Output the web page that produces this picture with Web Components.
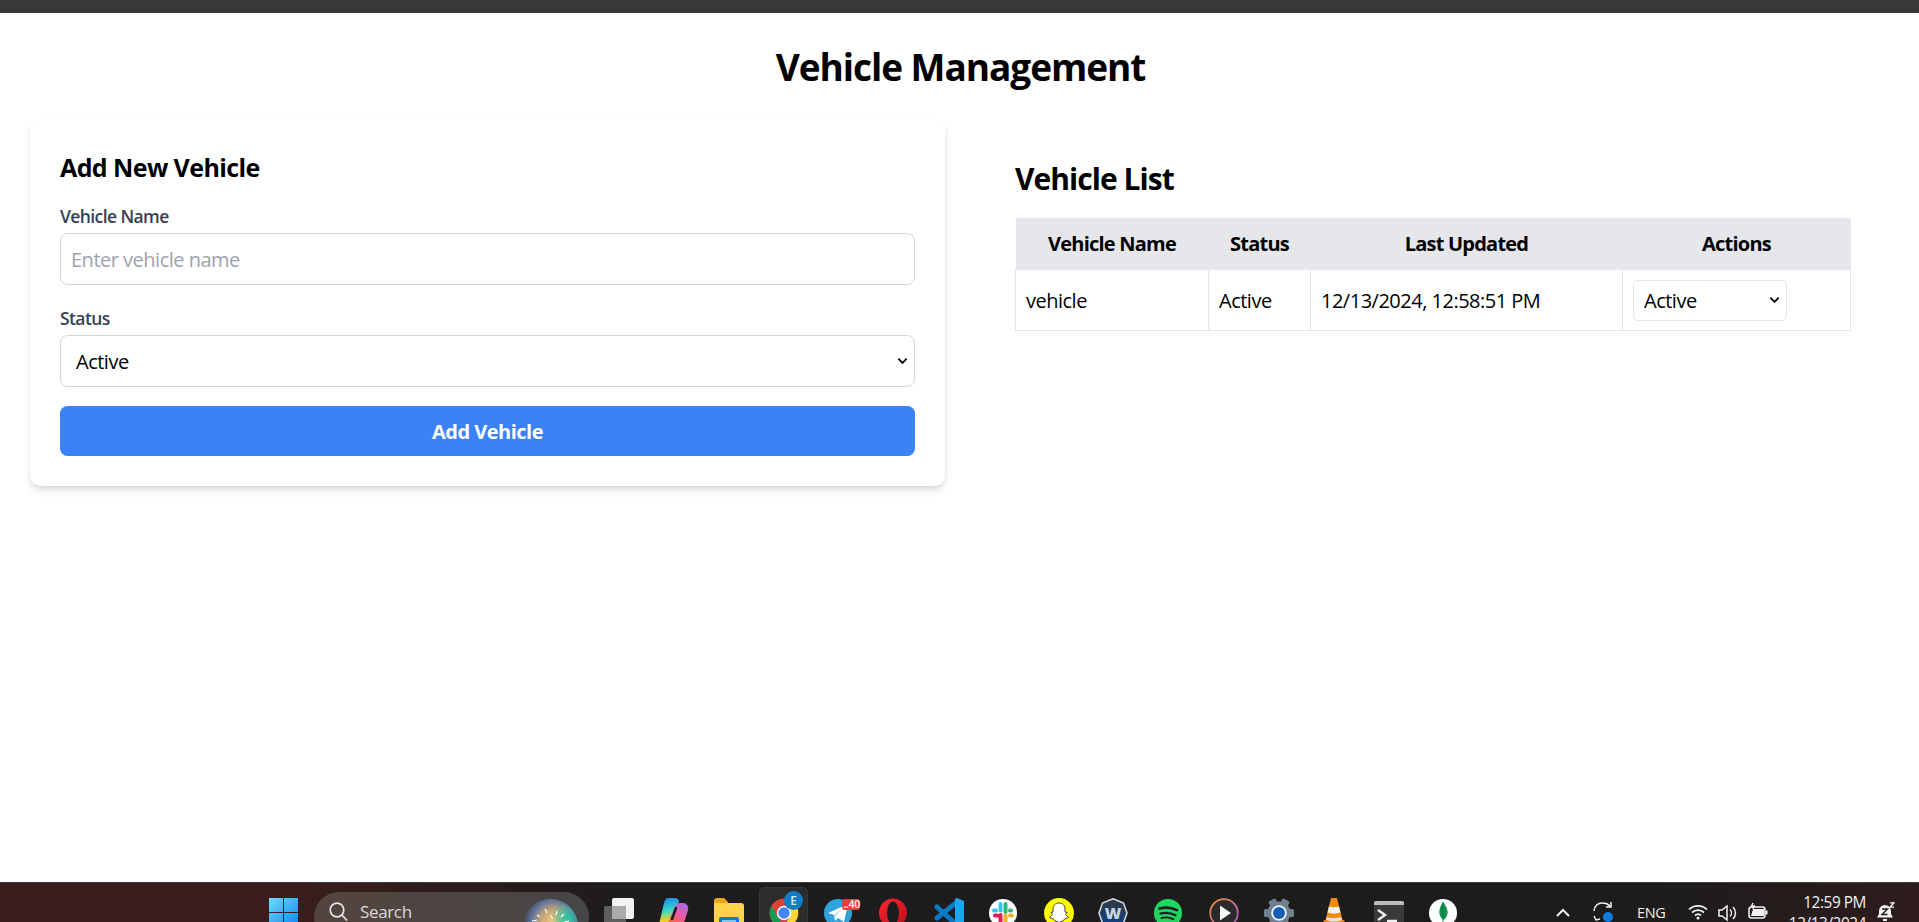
<!DOCTYPE html>
<html lang="en">
<head>
<meta charset="utf-8">
<title>Vehicle Management</title>
<style>
  html, body { margin: 0; height: 922px; overflow: hidden; background: #fff; }
  body { display: flex; flex-direction: column; font-family: "Open Sans", "Noto Sans", sans-serif; color: #000; }
</style>
</head>
<body>
<vehicle-app></vehicle-app>
<win-taskbar></win-taskbar>

<script>
// Shared text squeeze, the reference font is narrower than what we have here
// The native select arrow is too small here, so it is redrawn as an svg background
const FIELD_CSS = `
  select {
    display: block;
    box-sizing: border-box;
    appearance: none;
    background: #fff url("data:image/svg+xml,%3Csvg xmlns='http://www.w3.org/2000/svg' viewBox='0 0 12 8'%3E%3Cpath d='M1.5 1.5 6 6l4.500-4.500' fill='none' stroke='%23000' stroke-width='2'/%3E%3C/svg%3E") no-repeat right 6px center / 11px 8px;
    color: #000;
    font: 20px "Open Sans", sans-serif;
    letter-spacing: -0.5px;
  }
`;

class VehicleForm extends HTMLElement {
  constructor() {
    super();
    const shadow = this.attachShadow({ mode: 'open' });
    shadow.innerHTML = `
      <style>
      ${FIELD_CSS}
      :host {
        display: block;
        box-sizing: border-box;
        height: 366px;
        padding: 30px;
        border-radius: 10px;
        background: #fff;
        box-shadow: 0 5px 8px -1px #0000001f, 0 2px 5px -2px #0000001a;
      }
      h2 { margin: 0 0 20px; font-size: 25px; line-height: 34px; padding-bottom: 1px; font-weight: 700; letter-spacing: -0.6px; }
      label { display: block; height: 25px; margin-bottom: 3px; font-size: 17.5px; line-height: 23px; font-weight: 600; color: #374151; letter-spacing: -0.6px; }
      input {
        display: block;
        box-sizing: border-box;
        width: 100%;
        height: 52px;
        margin-bottom: 22px;
        padding: 0 10px;
        border: 1px solid #d1d5db;
        border-radius: 7.5px;
        outline: none;
        font: 20px "Open Sans", sans-serif;
        letter-spacing: -0.5px;
      }
      input::placeholder { color: #9ca3af; opacity: 1; }
      select { width: 100%; height: 52px; margin-bottom: 19px; padding: 0 15px; border: 1px solid #d1d5db; border-radius: 7.5px; }
      button {
        display: block;
        width: 100%;
        height: 50px;
        border: 0;
        border-radius: 7.5px;
        background: #3b82f6;
        color: #fff;
        font: 700 20px "Open Sans", sans-serif;
        letter-spacing: -0.5px;
      }
      </style>
      <h2>Add New Vehicle</h2>
      <label for="name">Vehicle Name</label>
      <input id="name" type="text" placeholder="Enter vehicle name">
      <label for="status">Status</label>
      <select id="status"><option>Active</option><option>Inactive</option></select>
      <button type="button">Add Vehicle</button>
    `;
  }
}
customElements.define('vehicle-form', VehicleForm);

class VehicleTable extends HTMLElement {
  constructor() {
    super();
    const shadow = this.attachShadow({ mode: 'open' });
    shadow.innerHTML = `
      <style>
      ${FIELD_CSS}
      :host { display: block; padding: 40px; }
      h2 { margin: 0 0 18px; font-size: 30px; line-height: 38px; padding-bottom: 2px; font-weight: 700; letter-spacing: -0.95px; }
      table { width: 835px; table-layout: fixed; border-collapse: collapse; font-size: 20px; letter-spacing: -0.5px; }
      th { height: 51px; padding: 0 10px; background: #e5e7eb; font-weight: 700; text-align: center; letter-spacing: -0.78px; }
      td { height: 60px; padding: 0 10px; border: 1px solid #e5e7eb; text-align: left; white-space: nowrap; }
      select { width: 154px; height: 41px; padding: 0 10px; border: 1px solid #e5e7eb; border-radius: 5px; }
      </style>
      <h2>Vehicle List</h2>
      <table>
        <colgroup><col style="width:193px"><col style="width:102px"><col style="width:312px"><col style="width:228px"></colgroup>
        <thead><tr><th>Vehicle Name</th><th>Status</th><th>Last Updated</th><th>Actions</th></tr></thead>
        <tbody>
          <tr>
            <td>vehicle</td>
            <td>Active</td>
            <td>12/13/2024, 12:58:51 PM</td>
            <td><select><option>Active</option><option>Inactive</option></select></td>
          </tr>
        </tbody>
      </table>
    `;
  }
}
customElements.define('vehicle-table', VehicleTable);

class VehicleApp extends HTMLElement {
  constructor() {
    super();
    const shadow = this.attachShadow({ mode: 'open' });
    shadow.innerHTML = `
      <style>
      :host { display: block; flex: 1; min-height: 0; }
      #browser-edge { height: 13px; background: #383838; }
      h1 { margin: 0; padding: 31px 0 31px 2px; text-align: center; font-size: 37px; line-height: 45px; font-weight: 700; letter-spacing: -1.05px; }
      #columns { display: grid; grid-template-columns: 915px 915px; gap: 30px; padding: 0 30px; align-items: start; }
      </style>
      <div id="browser-edge"></div>
      <h1>Vehicle Management</h1>
      <div id="columns">
        <vehicle-form></vehicle-form>
        <vehicle-table></vehicle-table>
      </div>
    `;
  }
}
customElements.define('vehicle-app', VehicleApp);

// All taskbar pictures are drawn on a 30x30 box, the taskbar cuts off the bottom
const ICONS = {
  windows: `<defs><linearGradient id="w" x1="0" y1="0" x2="1" y2="1"><stop offset="0" stop-color="#6fdcff"/><stop offset="1" stop-color="#0a86e8"/></linearGradient></defs>
    <path fill="url(#w)" d="M0 0h14v14H0zM15 0h14v14H15zM0 15h14v14H0zM15 15h14v14H15z"/>`,
  taskview: `<rect x="0" y="8" width="22" height="22" rx="2" fill="#5f5f5f"/><rect x="8" y="0" width="22" height="21" rx="2" fill="#f2f2f2"/><path d="M8 8h14v13H10a2 2 0 0 1-2-2z" fill="#ababab"/>`,
  copilot: `<defs><linearGradient id="c1" x1=".4" y1="0" x2=".5" y2="1"><stop offset="0" stop-color="#1b8fe8"/><stop offset=".45" stop-color="#38d8c8"/><stop offset=".8" stop-color="#f5d020"/></linearGradient><linearGradient id="c2" x1=".8" y1="0" x2=".3" y2="1"><stop offset="0" stop-color="#a86ce6"/><stop offset=".5" stop-color="#f05aa0"/><stop offset="1" stop-color="#ff6a1f"/></linearGradient></defs>
    <path fill="url(#c1)" d="M9 0h7c2 0 3.5 1 4 3L13 24c-1 3-3 4-5 4H5c-3 0-5-3-4-6L5 5c1-3 2-5 4-5z"/>
    <path fill="url(#c2)" d="M21 5h3c4 0 6 4 5 7l-4 13c-1 3-3 5-6 5h-7c-2 0-3.5-1-4-3l8-19c1-2 3-3 5-3z"/>
    <path d="M17 10l-4 11" stroke="#1c1c1c" stroke-width="2.5" stroke-linecap="round"/>`,
  folder: `<path d="M0 3a3 3 0 0 1 3-3h7l4 4v4H0z" fill="#e8a80f"/><path d="M0 5h27a3 3 0 0 1 3 3v22H0z" fill="#ffd34e"/><rect x="5" y="19" width="20" height="11" rx="2" fill="#0f78d4"/><rect x="8" y="22" width="14" height="8" fill="#7fc4f5"/>`,
  chrome: `<circle cx="15" cy="15" r="14.5" fill="#db4437"/><path d="M2.5 8 10 21l5 8.5A14.5 14.5 0 0 1 2.5 8z" fill="#0f9d58"/><path d="M15 8.5h12.6A14.5 14.5 0 0 1 15 29.5L21 18z" fill="#fdd835"/><circle cx="15" cy="15" r="7.2" fill="#fff"/><circle cx="15" cy="15" r="5.7" fill="#4285f4"/>`,
  telegram: `<circle cx="14" cy="15" r="14" fill="#2fa3db"/><path d="M4 15 24 6l-4 18-6-4-3 3-1-6z" fill="#fff"/><path d="m10 17 9-7-7 8-.8 4z" fill="#c8dff0"/>`,
  opera: `<defs><linearGradient id="o" x1="0" y1="0" x2="1" y2="1"><stop offset="0" stop-color="#ff2530"/><stop offset="1" stop-color="#b50f1a"/></linearGradient></defs><ellipse cx="14" cy="15" rx="14" ry="14.5" fill="url(#o)"/><ellipse cx="14" cy="15" rx="6" ry="11.5" fill="#1c1c1c"/>`,
  vscode: `<path d="M23 4 3 20M3 9l20 18" fill="none" stroke="#0b78c4" stroke-width="5" stroke-linecap="round"/><path d="M21 1l2-1 7 3v24l-7 3-2-1z" fill="#1fa5f0"/>`,
  slack: `<circle cx="14" cy="15" r="14" fill="#fff"/>
    <g stroke-width="4" stroke-linecap="round"><path d="M11.5 6v6.5M5 12.5h2" stroke="#36c5f0"/><path d="M16.5 6v8M22 12.5h-1" stroke="#2eb67d"/><path d="M16.5 24v-6.5M23 17.5h-2" stroke="#ecb22e"/><path d="M11.5 24v-7M6 17.5h2" stroke="#e01e5a"/></g>`,
  snapchat: `<circle cx="15" cy="15" r="15" fill="#fffc00"/><path d="M15 5c4 0 6 3 6 6v3l2 .5-1.5 2 3 3-4 1.5-1 1.5-4.5 2-4.5-2-1-1.500-4-1.500 3-3L7 14.500 9 14v-3c0-3 2-6 6-6z" fill="#fff" stroke="#1c1c1c" stroke-width=".8"/>`,
  windscribe: `<defs><linearGradient id="ws" x1="0" y1="0" x2="0" y2="1"><stop offset=".3" stop-color="#2b3b4d"/><stop offset=".8" stop-color="#123f80"/></linearGradient></defs><path d="M14 .8 24.5 5 28 15l-3.500 10L14 29.200 3.500 25 0 15 3.500 5z" fill="url(#ws)" stroke="#d5dde4" stroke-width="1.5"/><text x="14" y="20.5" text-anchor="middle" font-family="Open Sans" font-weight="800" font-size="16" fill="#c9d6e2">W</text>`,
  spotify: `<circle cx="14" cy="15" r="14" fill="#1ed760"/><g fill="none" stroke="#1c1c1c" stroke-linecap="round"><path d="M5.5 10.500c6-1.500 12-1 17.500 1.700" stroke-width="2.7"/><path d="M6.5 15.500c5-1.200 10.500-.7 15 1.700" stroke-width="2.3"/><path d="M7.5 20c4-1 8.500-.6 12 1.300" stroke-width="1.9"/></g>`,
  player: `<defs><linearGradient id="p" x1="0" y1="0" x2="1" y2="1"><stop offset="0" stop-color="#f08a3c"/><stop offset="1" stop-color="#a55cc9"/></linearGradient></defs><circle cx="15" cy="15" r="13.8" fill="#2a2a2a" stroke="url(#p)" stroke-width="1.8"/><path d="M11 7.500 22 15l-11 7.500z" fill="#f5f5f5"/>`,
  gear: `<g fill="#6f8091"><circle cx="15" cy="15" r="11.5"/><rect x="11" y="0" width="8" height="30" rx="1.5" transform="rotate(30 15 15)"/><rect x="11" y="0" width="8" height="30" rx="1.5" transform="rotate(90 15 15)"/><rect x="11" y="0" width="8" height="30" rx="1.5" transform="rotate(150 15 15)"/></g><circle cx="15" cy="15" r="7.8" fill="#f2f2f2"/><circle cx="15" cy="15" r="6" fill="#0f5fb5"/>`,
  vlc: `<path d="M12 0h6l6 24H6z" fill="#f08a00"/><path d="M10 8.500c3 1 7 1 10 0l1.500 6c-4 1.500-9 1.500-13 0z" fill="#f2f2f2"/><path d="M5 22h20l3 8H2z" fill="#f47c00"/><path d="M8 19c4 1.500 10 1.500 14 0l1 3c-5 2-11 2-16 0z" fill="#e6e6e6"/>`,
  terminal: `<rect x="0" y="3" width="30" height="27" rx="2" fill="#3a3a3a"/><path d="M0 5a2 2 0 0 1 2-2h26a2 2 0 0 1 2 2v2H0z" fill="#bcbcbc"/><path d="m4 12 7 5-7 5" fill="none" stroke="#f0f0f0" stroke-width="2.5"/><path d="M13 23h10" stroke="#f0f0f0" stroke-width="2.5"/>`,
  mongo: `<circle cx="14" cy="15" r="14" fill="#fff"/><path d="M14 4c4 5 5 9 4.500 12-.5 3-2.500 5-4 6-1.500-1-3.500-3-4-6C10 13 10.500 9 14 4z" fill="#12924f"/><path d="M14 4v24" stroke="#0b6b39" stroke-width=".8"/>`,
};

class TaskIcon extends HTMLElement {
  constructor() {
    super();
    const shadow = this.attachShadow({ mode: 'open' });
    shadow.innerHTML = `
      <style>
      :host { display: flex; flex: none; justify-content: center; width: 55px; height: 39px; padding-top: 15px; box-sizing: border-box; position: relative; }
      :host([active])::before { content: ''; position: absolute; left: 3px; right: 3px; top: 4px; height: 50px; border-radius: 5px; background: #2c2c2c; border: 1px solid #353535; box-sizing: border-box; }
      svg { width: 30px; height: 30px; flex: none; position: relative; overflow: visible; }
      ::slotted(*) { position: absolute; }
      </style>
      <svg viewBox="0 0 30 30">${ICONS[this.getAttribute('name')]}</svg>
      <slot></slot>
    `;
  }
}
customElements.define('task-icon', TaskIcon);

class WinTaskbar extends HTMLElement {
  constructor() {
    super();
    const icons = ['copilot', 'folder', 'chrome', 'telegram', 'opera', 'vscode', 'slack', 'snapchat',
      'windscribe', 'spotify', 'player', 'gear', 'vlc', 'terminal', 'mongo'];
    const badges = {
      chrome: '<span class="badge-e">E</span>',
      telegram: '<span class="badge-tg">..40</span>',
    };
    const shadow = this.attachShadow({ mode: 'open' });
    shadow.innerHTML = `
      <style>
      :host {
        display: flex;
        flex: none;
        height: 40px;
        padding-left: 256px;
        overflow: hidden;
        box-sizing: border-box;
        border-top: 1px solid #3d3d3d;
        background: linear-gradient(90deg, #3b1c1c 0, #3a1d1d 300px, #1e1c1c 620px, #1c1c1c 1650px, #2f1c1c 1919px);
        color: #f0f0f0;
        font-family: "Open Sans", sans-serif;
      }
      #search {
        flex: none;
        display: flex;
        align-items: flex-start;
        box-sizing: border-box;
        width: 275px;
        height: 50px;
        margin: 9px 2px 0 3px;
        padding: 10px 0 0 15px;
        border-radius: 25px;
        background: linear-gradient(90deg, #54443f, #464646);
        font-size: 17px;
        line-height: 20px;
        color: #d8d8d8;
      }
      #search svg { flex: none; width: 19px; height: 19px; margin-right: 12px; }
      #search span { flex: 1; letter-spacing: -0.35px; }
      #search #highlight { width: 55px; height: 55px; margin: -3px 11px 0 0; }
      .badge-e {
        left: 28px; top: 8px; width: 19px; height: 19px;
        border-radius: 50%;
        background: #0f7dc2;
        color: #cfe8f7;
        font: 600 12px/19px "Open Sans", sans-serif;
        text-align: center;
      }
      .badge-tg {
        left: 31px; top: 16px; width: 18px; height: 11px;
        border-radius: 3px;
        background: #ef3b3b;
        color: #fff;
        font: 600 10.5px/11px "Open Sans", sans-serif;
        letter-spacing: -0.3px;
        text-align: right;
      }
      #tray { flex: none; display: flex; align-items: flex-start; margin-left: 85px; }
      #tray svg { flex: none; display: block; fill: none; stroke: #f2f2f2; stroke-width: 1.5; }
      #eng { width: 28px; margin: 21px 23px 0 22px; font-size: 14.5px; line-height: 18px; letter-spacing: -0.3px; }
      #clock { width: 78px; margin: 9px 11px 0 20px; text-align: right; font-size: 15.4px; line-height: 21px; letter-spacing: -0.45px; white-space: nowrap; }
      #sync-dot { stroke: none; fill: #0f7be0; }
      </style>
      <task-icon name="windows"></task-icon>
      <div id="search">
        <svg viewBox="0 0 19 19" fill="none" stroke="#e6e6e6" stroke-width="1.7"><circle cx="8" cy="8" r="6.8"/><path d="m13 13 5 5.5"/></svg>
        <span>Search</span>
        <svg id="highlight" viewBox="0 0 55 55">
          <defs>
            <radialGradient id="sky" cx=".55" cy=".42" r=".55"><stop offset="0" stop-color="#f6c97c"/><stop offset=".4" stop-color="#c9a878"/><stop offset=".75" stop-color="#5a6f9e"/><stop offset="1" stop-color="#5a5f96" stop-opacity="0"/></radialGradient>
            <radialGradient id="teal" cx=".8" cy=".35" r=".3"><stop offset="0" stop-color="#1fc9a6"/><stop offset="1" stop-color="#1fc9a6" stop-opacity="0"/></radialGradient>
          </defs>
          <circle cx="27.5" cy="27.5" r="27.5" fill="url(#sky)"/>
          <circle cx="27.5" cy="27.5" r="27.5" fill="url(#teal)"/>
          <path d="M9 22l5-1M14 16l3 2M22 10l2 4M27 16l3 4M34 12l-1 4M41 15l-3 3M46 22l-5 1M24 24h3" stroke="#fff" stroke-width="1.2"/>
          <path d="M8 36 20 26l8 6 9-6 11 10v15H8z" fill="#12458f"/>
        </svg>
      </div>
      <task-icon name="taskview"></task-icon>
      ${icons.map((name) => `<task-icon name="${name}" ${name === 'chrome' ? 'active' : ''}>${badges[name] || ''}</task-icon>`).join('')}
      <div id="tray">
        <svg width="14" height="9" viewBox="0 0 14 9" style="margin-top:25px"><path d="m1 8 6-6 6 6" stroke-width="2"/></svg>
        <svg width="22" height="20" viewBox="0 0 22 20" style="margin:19px 0 0 23px"><path d="M1 9a8 8 0 0 1 9-8c3 0 5 1 7 3M18 0v5h-5M1 14l2 4 4-1"/><circle id="sync-dot" cx="15" cy="15" r="5"/></svg>
        <span id="eng">ENG</span>
        <svg width="20" height="16" viewBox="0 0 20 16" style="margin-top:21px"><path d="M1 5.5a13 13 0 0 1 18 0M4 8.5a9 9 0 0 1 12 0M7 11.5a4.500 4.500 0 0 1 6 0" stroke-width="1.7"/><circle cx="10" cy="14" r="1.5" fill="#f2f2f2" stroke="none"/></svg>
        <svg width="20" height="18" viewBox="0 0 20 18" style="margin:21px 0 0 10px"><path d="M1 6h3l5-4v14l-5-4H1zM12 5.5a5 5 0 0 1 0 7M15 3a8.500 8.500 0 0 1 0 12"/></svg>
        <svg width="20" height="18" viewBox="0 0 20 18" style="margin:19px 0 0 10px"><rect x="1" y="5" width="16" height="11" rx="2.5"/><path d="M18.5 8.500v4" stroke-width="2"/><path d="M5 7h11v7H3z" fill="#f2f2f2" stroke="none"/><path d="M5 1 3 5l3-1-1 3"/></svg>
        <div id="clock">12:59 PM<br>12/13/2024</div>
        <svg width="18" height="20" viewBox="0 0 18 20" style="margin-top:19px"><path d="M8 3a6 6 0 0 1 6 6v3l2 3.500H0L2 12V9a6 6 0 0 1 6-6zM6 17h4v2H6z" fill="#f2f2f2" stroke="none"/><path d="M5 7h5.500L5 12.500h5.500" stroke="#1c1c1c" stroke-width="1.4"/><path d="M13 .8h4l-4 4.400h4" stroke-width="1.3"/></svg>
      </div>
    `;
  }
}
customElements.define('win-taskbar', WinTaskbar);
</script>
</body>
</html>
